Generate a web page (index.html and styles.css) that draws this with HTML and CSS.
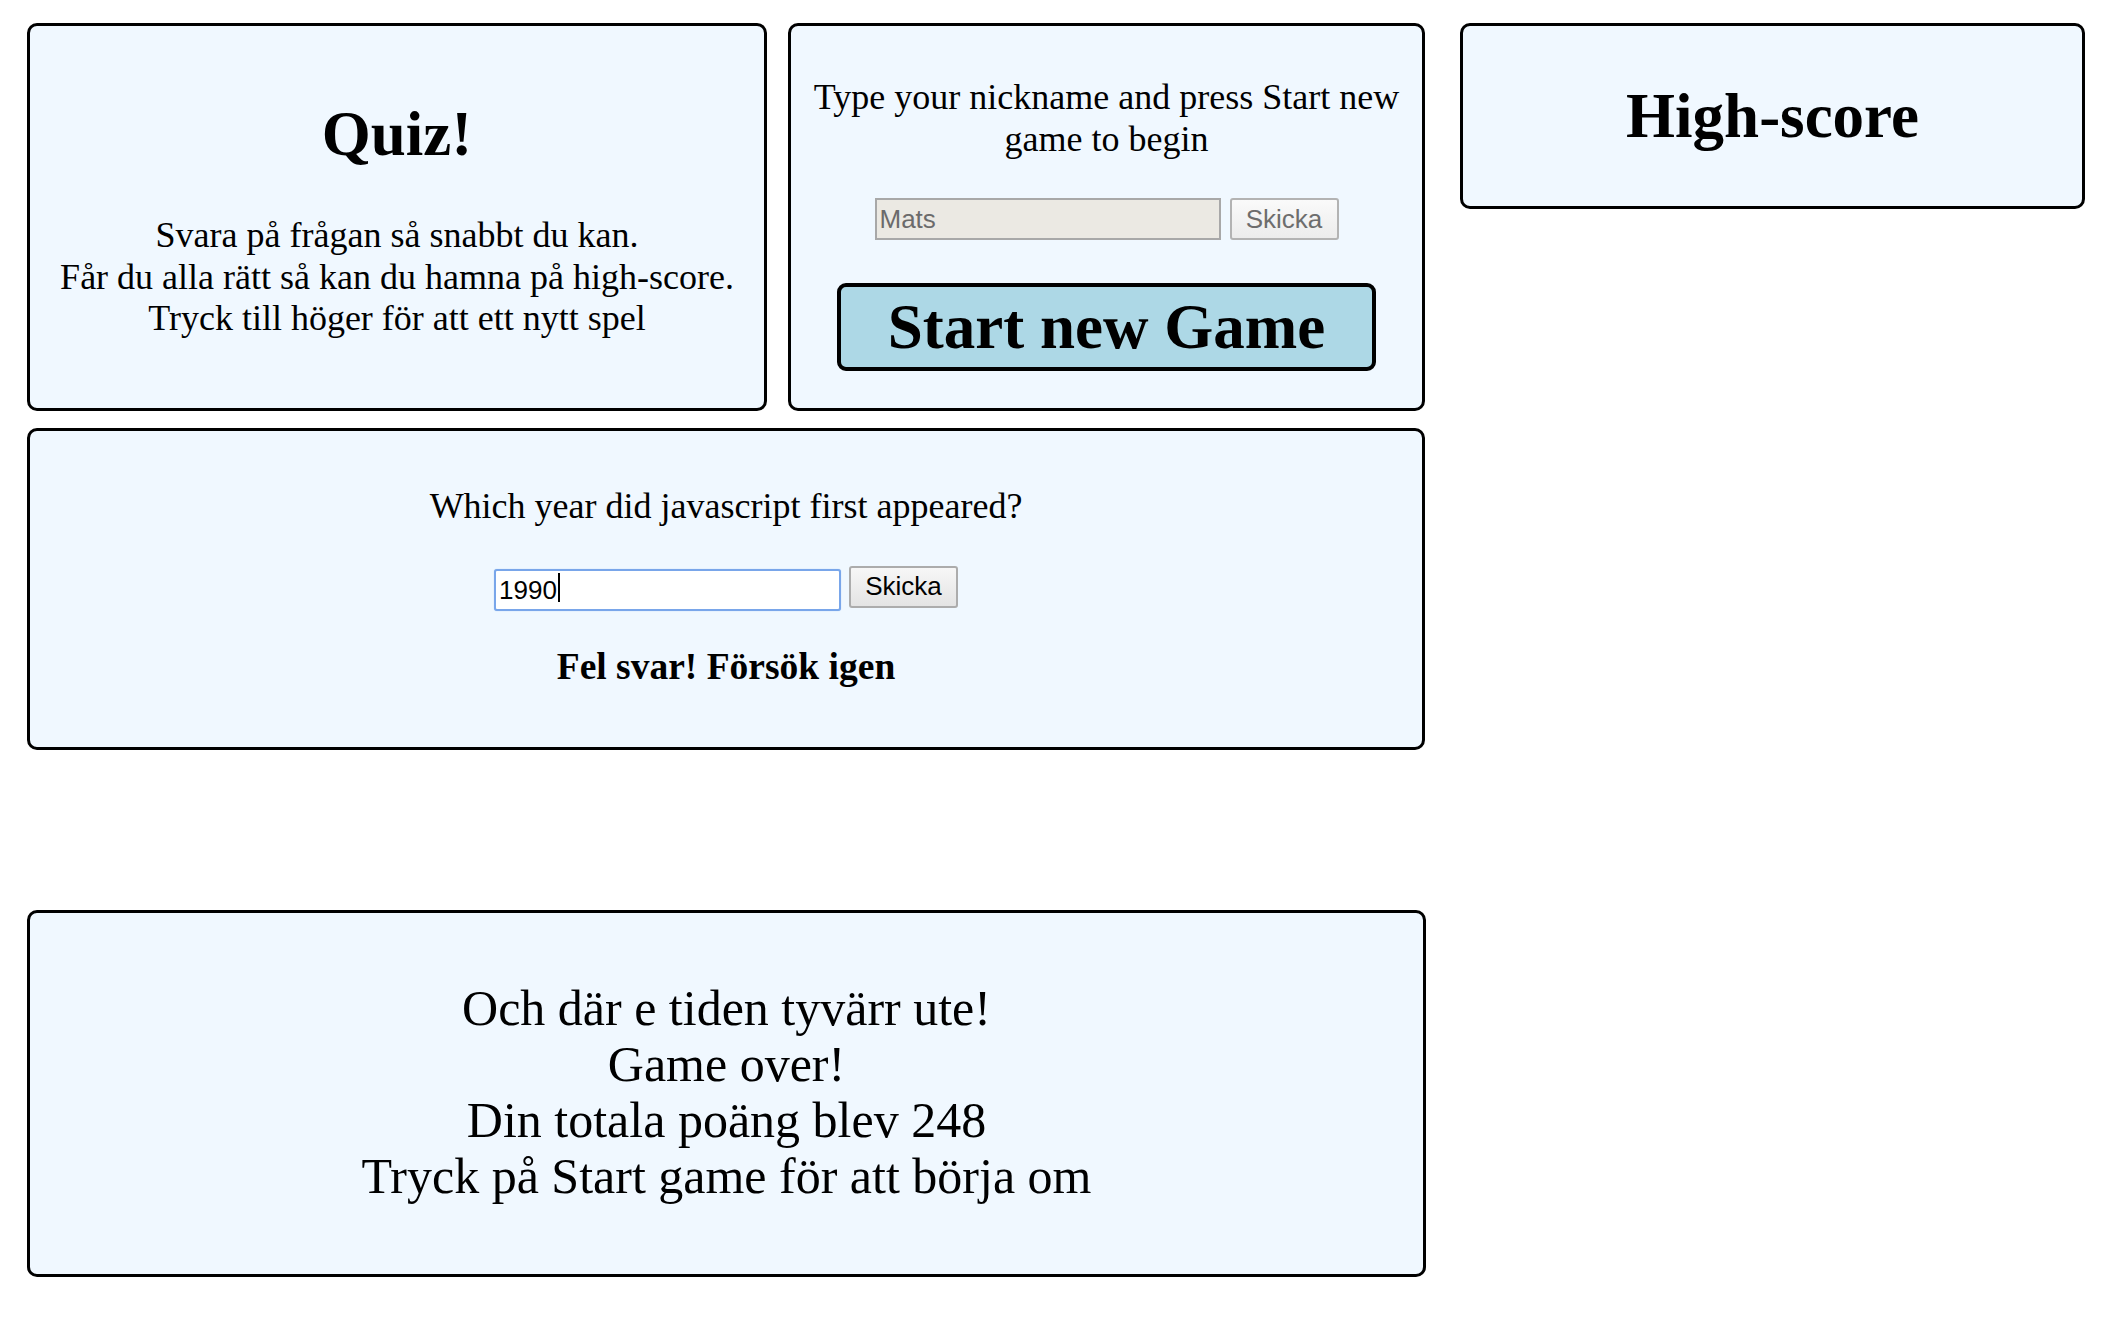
FILE: index.html
```html
<!DOCTYPE html>
<html lang="sv">
<head>
<meta charset="utf-8">
<title>Quiz!</title>
<link rel="stylesheet" href="styles.css">
</head>
<body>
<main class="page">
  <div class="board">
    <section class="card intro">
      <h1 class="title">Quiz!</h1>
      <p class="intro-text">Svara på frågan så snabbt du kan.<br>Får du alla rätt så kan du hamna på high-score.<br>Tryck till höger för att ett nytt spel</p>
    </section>

    <section class="card nick">
      <p class="nick-text">Type your nickname and press Start new game to begin</p>
      <div class="field-row">
        <input class="text-field text-field--disabled" type="text" value="Mats" disabled>
        <button class="small-btn small-btn--disabled" type="button" disabled>Skicka</button>
      </div>
      <button class="start-btn" type="button">Start new Game</button>
    </section>

    <section class="card highscore">
      <h2 class="title">High-score</h2>
    </section>

    <section class="card question">
      <p class="question-text">Which year did javascript first appeared?</p>
      <div class="field-row">
        <span class="field-wrap">
          <input class="text-field text-field--focus" type="text" value="1990">
          <span class="caret"></span>
        </span>
        <button class="small-btn" type="button">Skicka</button>
      </div>
      <p class="feedback">Fel svar! Försök igen</p>
    </section>
  </div>

  <section class="card gameover">
    <p class="gameover-text">Och där e tiden tyvärr ute!<br>Game over!<br>Din totala poäng blev 248<br>Tryck på Start game för att börja om</p>
  </section>
</main>
</body>
</html>
```

FILE: styles.css
```css
* {
  box-sizing: border-box;
}

html, body {
  margin: 0;
  padding: 0;
  background: #ffffff;
}

body {
  font-family: "Liberation Serif", "Times New Roman", serif;
  font-size: 36px;
  color: #000000;
}

.page {
  padding: 23px 0 0 27px;
}

.board {
  display: grid;
  grid-template-columns: 740px 637px 639px;
  grid-template-rows: 388px 322px;
  column-gap: 21px;
  row-gap: 17px;
}

.card {
  background: #f0f8ff;
  border: 3px solid #000000;
  border-radius: 10px;
  text-align: center;
}

.title {
  margin: 0;
  font-size: 63px;
  font-weight: bold;
  line-height: normal;
}

/* Intro card */
.intro {
  padding-top: 72px;
}

.intro .title {
  margin-bottom: 44px;
}

.intro-text {
  margin: 0;
  line-height: 41.5px;
}

/* Nickname card */
.nick {
  padding: 51px 20px 0;
}

.nick-text {
  margin: 0;
  line-height: 41.5px;
}

.field-row {
  display: flex;
  justify-content: center;
  align-items: center;
  gap: 9px;
}

.nick .field-row {
  margin-top: 38px;
}

.text-field {
  width: 346px;
  height: 42px;
  margin: 0;
  padding: 0 0 0 3px;
  border: 2px solid #a9a9a9;
  font-family: "Liberation Sans", Arial, sans-serif;
  font-size: 26px;
  color: #000000;
  background: #ffffff;
  outline: none;
}

.text-field--disabled {
  background: #ebe9e3;
  color: #6b6b6b;
  border-color: #a8a8a8;
}

.text-field--focus {
  width: 347px;
  border-color: #79a6ea;
  border-radius: 3px;
  box-shadow: 0 0 1px #9cc0f2;
}

.field-wrap {
  position: relative;
  display: inline-block;
  height: 42px;
}

.caret {
  position: absolute;
  left: 64px;
  top: 7px;
  width: 2px;
  height: 29px;
  background: #000000;
}

.small-btn {
  width: 109px;
  height: 42px;
  margin: 0;
  padding: 0;
  border: 2px solid #acacac;
  border-radius: 3px;
  background: linear-gradient(#f7f7f7, #e4e4e4);
  font-family: "Liberation Sans", Arial, sans-serif;
  font-size: 26px;
  color: #000000;
}

.small-btn--disabled {
  color: #6d6d6d;
  border-color: #b3b3b3;
  background: linear-gradient(#fafafa, #ececec);
}

.start-btn {
  display: block;
  width: 539px;
  height: 88px;
  margin: 43px auto 0;
  padding: 0;
  border: 4px solid #000000;
  border-radius: 9px;
  background: #add8e6;
  font-family: "Liberation Serif", "Times New Roman", serif;
  font-size: 63px;
  font-weight: bold;
  line-height: normal;
  color: #000000;
}

/* High-score */
.highscore {
  align-self: start;
  height: 186px;
  margin-left: 14px;
  width: 625px;
  display: flex;
  align-items: center;
  justify-content: center;
}

/* Question card */
.question {
  grid-column: 1 / span 2;
  padding-top: 55px;
}

.question-text {
  margin: 0;
  line-height: 41.5px;
}

.question .field-row {
  gap: 8px;
  margin-top: 38px;
}

.feedback {
  margin: 38px 0 0;
  font-size: 37.5px;
  font-weight: bold;
  line-height: 41.5px;
}

/* Game over */
.gameover {
  width: 1399px;
  height: 367px;
  margin-top: 160px;
  padding-top: 67px;
}

.gameover-text {
  margin: 0;
  font-size: 50px;
  line-height: 56px;
}
```
